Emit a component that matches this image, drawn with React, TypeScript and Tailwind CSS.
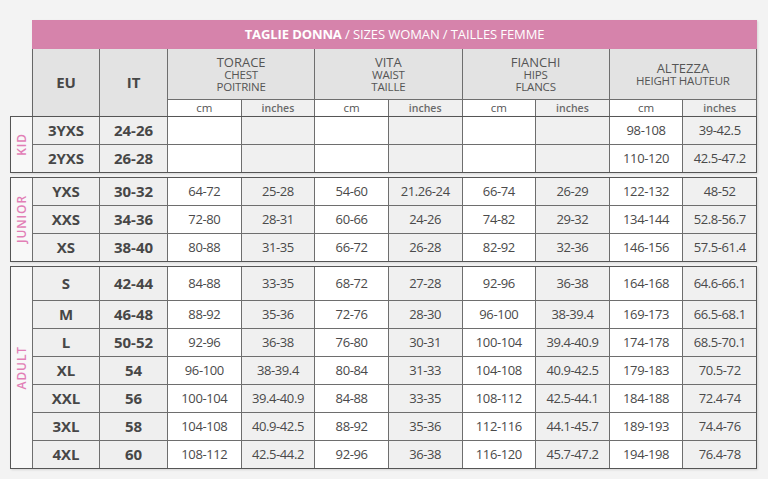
import React from "react";

type Row = { eu: string; it: string; vals: string[] };

const GROUPS: { label: string; rows: Row[]; first?: string }[] = [
  {
    label: "KID",
    rows: [
      { eu: "3YXS", it: "24-26", vals: ["", "", "", "", "", "", "98-108", "39-42.5"] },
      { eu: "2YXS", it: "26-28", vals: ["", "", "", "", "", "", "110-120", "42.5-47.2"] },
    ],
  },
  {
    label: "JUNIOR",
    rows: [
      { eu: "YXS", it: "30-32", vals: ["64-72", "25-28", "54-60", "21.26-24", "66-74", "26-29", "122-132", "48-52"] },
      { eu: "XXS", it: "34-36", vals: ["72-80", "28-31", "60-66", "24-26", "74-82", "29-32", "134-144", "52.8-56.7"] },
      { eu: "XS", it: "38-40", vals: ["80-88", "31-35", "66-72", "26-28", "82-92", "32-36", "146-156", "57.5-61.4"] },
    ],
  },
  {
    label: "ADULT",
    first: "h-[33px]",
    rows: [
      { eu: "S", it: "42-44", vals: ["84-88", "33-35", "68-72", "27-28", "92-96", "36-38", "164-168", "64.6-66.1"] },
      { eu: "M", it: "46-48", vals: ["88-92", "35-36", "72-76", "28-30", "96-100", "38-39.4", "169-173", "66.5-68.1"] },
      { eu: "L", it: "50-52", vals: ["92-96", "36-38", "76-80", "30-31", "100-104", "39.4-40.9", "174-178", "68.5-70.1"] },
      { eu: "XL", it: "54", vals: ["96-100", "38-39.4", "80-84", "31-33", "104-108", "40.9-42.5", "179-183", "70.5-72"] },
      { eu: "XXL", it: "56", vals: ["100-104", "39.4-40.9", "84-88", "33-35", "108-112", "42.5-44.1", "184-188", "72.4-74"] },
      { eu: "3XL", it: "58", vals: ["104-108", "40.9-42.5", "88-92", "35-36", "112-116", "44.1-45.7", "189-193", "74.4-76"] },
      { eu: "4XL", it: "60", vals: ["108-112", "42.5-44.2", "92-96", "36-38", "116-120", "45.7-47.2", "194-198", "76.4-78"] },
    ],
  },
];

const MEASURES = [
  { lines: ["TORACE", "CHEST", "POITRINE"] },
  { lines: ["VITA", "WAIST", "TAILLE"] },
  { lines: ["FIANCHI", "HIPS", "FLANCS"] },
  { lines: ["ALTEZZA", "HEIGHT HAUTEUR"] },
];

function Header() {
  return (
    <div className="ml-[22px] shadow-[1px_1px_2px_rgba(0,0,0,0.12)]">
      <div className="h-[29px] bg-[#d683ab] flex items-center justify-center text-white text-[13px] tracking-[-0.1px]">
        <span className="font-bold">TAGLIE DONNA</span>
        <span>&nbsp;/ SIZES WOMAN / TAILLES FEMME</span>
      </div>
      <div className="grid grid-cols-[66px_67px_repeat(8,minmax(0,1fr))] grid-rows-[50px_16px] gap-px bg-[#6e6e6e] border-x border-[#666]">
        <div className="row-span-2 bg-[#e3e3e3] flex items-center justify-center font-bold text-[15px] text-[#474747]">
          EU
        </div>
        <div className="row-span-2 bg-[#e3e3e3] flex items-center justify-center font-bold text-[15px] text-[#474747]">
          IT
        </div>
        {MEASURES.map((m) => (
          <div
            key={m.lines[0]}
            className="col-span-2 bg-[#e3e3e3] flex flex-col items-center justify-center text-[#555]"
          >
            {m.lines.map((l, i) => (
              <span
                key={l}
                className={
                  i === 0
                    ? "text-[13px] leading-[13px]"
                    : "text-[11.5px] leading-[12px] tracking-[-0.2px]"
                }
              >
                {l}
              </span>
            ))}
          </div>
        ))}
        {MEASURES.map((m) => (
          <React.Fragment key={m.lines[0] + "sub"}>
            <div className="bg-white flex items-center justify-center text-[11.5px] text-[#555] leading-none">
              cm
            </div>
            <div className="bg-[#f0f0f0] flex items-center justify-center text-[10.5px] font-semibold text-[#6a6a6a] leading-none">
              inches
            </div>
          </React.Fragment>
        ))}
      </div>
    </div>
  );
}

function Group({ label, rows, first }: { label: string; rows: Row[]; first?: string }) {
  return (
    <div className="grid grid-cols-[21px_66px_67px_repeat(8,minmax(0,1fr))] gap-px bg-[#6e6e6e] border border-[#555] shadow-[1px_1px_2px_rgba(0,0,0,0.12)]">
      <div
        className="bg-[#f8f8f8] flex items-center justify-center"
        style={{ gridRow: `span ${rows.length}` }}
      >
        <span className="[writing-mode:vertical-rl] rotate-180 text-[12px] tracking-[0.9px] text-[#e27fb6] font-semibold">
          {label}
        </span>
      </div>
      {rows.map((r, ri) => {
        const h = ri === 0 && first ? first : "h-[27px]";
        return (
          <React.Fragment key={r.eu}>
            <div
              className={`${h} bg-[#efefef] flex items-center justify-center font-bold text-[15px] text-[#474747]`}
            >
              {r.eu}
            </div>
            <div
              className={`${h} bg-[#efefef] flex items-center justify-center font-bold text-[15px] text-[#474747]`}
            >
              {r.it}
            </div>
            {r.vals.map((v, vi) => (
              <div
                key={vi}
                className={`${h} ${
                  vi % 2 === 0 ? "bg-white" : "bg-[#f0f0f0]"
                } flex items-center justify-center text-[13px] tracking-[-0.4px] text-[#4a4a4a]`}
              >
                {v}
              </div>
            ))}
          </React.Fragment>
        );
      })}
    </div>
  );
}

export default function App() {
  return (
    <div
      className="w-[768px] h-[479px] bg-[#f3f3f3] pt-[20px] pl-[10px] overflow-hidden"
      style={{ fontFamily: '"Open Sans", "Noto Sans", sans-serif' }}
    >
      <div className="w-[747px]">
        <Header />
        <div className="flex flex-col gap-[4px]">
          {GROUPS.map((g) => (
            <Group key={g.label} label={g.label} rows={g.rows} first={g.first} />
          ))}
        </div>
      </div>
    </div>
  );
}
